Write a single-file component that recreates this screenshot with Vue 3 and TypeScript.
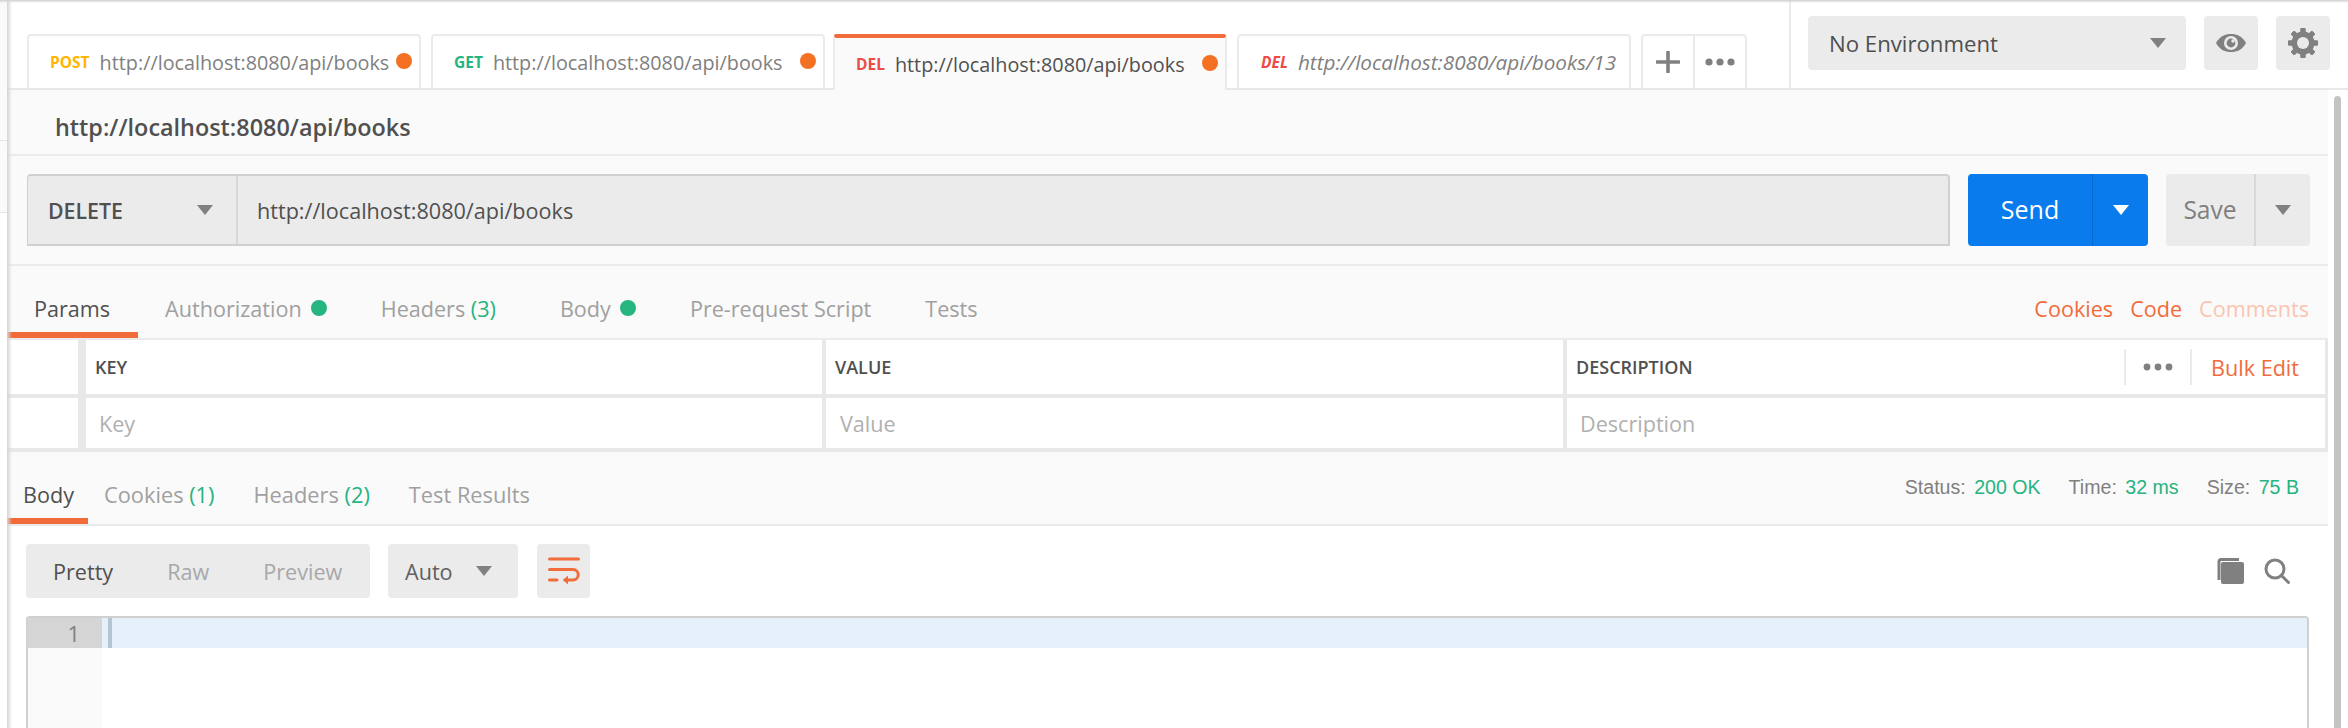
<script setup lang="ts">
interface Tab { method: string; url: string; cls: string; dot: boolean; active?: boolean; draft?: boolean }
const tabs: Tab[] = [
  { method: 'POST', url: 'http://localhost:8080/api/books', cls: 'post', dot: true },
  { method: 'GET', url: 'http://localhost:8080/api/books', cls: 'get', dot: true },
  { method: 'DEL', url: 'http://localhost:8080/api/books', cls: 'del', dot: true, active: true },
  { method: 'DEL', url: 'http://localhost:8080/api/books/13', cls: 'del', dot: false, draft: true },
]
const gearTeeth: number[] = [0, 45, 90, 135, 180, 225, 270, 315]
</script>

<template>
  <div class="app">
    <div class="rail">
      <div class="rail-a"></div>
      <div class="rail-b"></div>
      <div class="rail-c"></div>
    </div>
    <div class="main">
      <header class="topbar">
        <div class="tabs">
          <div
            v-for="(t, i) in tabs"
            :key="i"
            class="tab"
            :class="{ active: t.active, draft: t.draft }"
          >
            <span class="method" :class="t.cls">{{ t.method }}</span>
            <span class="tab-url">{{ t.url }}</span>
            <span v-if="t.dot" class="tab-dot"></span>
          </div>
          <div class="tab-actions">
            <div class="tab-action">
              <svg width="24" height="22" viewBox="0 0 24 22"><path d="M1 11H23M12 1V21" stroke="#808080" stroke-width="3.6" stroke-linecap="round" fill="none" /></svg>
            </div>
            <div class="tab-action last">
              <svg width="30" height="8" viewBox="0 0 30 8"><circle cx="4" cy="4" r="3.6" fill="#808080" /><circle cx="15" cy="4" r="3.6" fill="#808080" /><circle cx="26" cy="4" r="3.6" fill="#808080" /></svg>
            </div>
          </div>
        </div>
        <div class="env">
          <div class="env-select">
            <span>No Environment</span>
            <svg class="caret" width="16" height="10" viewBox="0 0 16 10"><path d="M0 0H16L8 10Z" fill="#808080" /></svg>
          </div>
          <div class="icon-btn">
            <svg width="32" height="20" viewBox="0 0 32 20">
              <path d="M1 10C5 3 10 1 16 1s11 2 15 9c-4 7-9 9-15 9S5 17 1 10Z" fill="#808080" />
              <circle cx="16" cy="10" r="7" fill="#ebebeb" />
              <circle cx="16" cy="10" r="4.4" fill="#808080" />
              <circle cx="18" cy="8" r="1.7" fill="#ebebeb" />
            </svg>
          </div>
          <div class="icon-btn">
            <svg width="32" height="32" viewBox="0 0 32 32">
              <rect v-for="a in gearTeeth" :key="a" x="13.5" y="1" width="5" height="30" rx="1" fill="#808080" :transform="`rotate(${a + 0} 16 16)`" />
              <circle cx="16" cy="16" r="11.5" fill="#808080" />
              <circle cx="16" cy="16" r="6" fill="#ebebeb" />
            </svg>
          </div>
        </div>
      </header>

      <div class="workspace">
        <div class="pane">
          <div class="title">http://localhost:8080/api/books</div>

          <div class="request">
            <div class="urlbar">
              <div class="method-select">
                <span>DELETE</span>
                <svg width="16" height="10" viewBox="0 0 16 10"><path d="M0 0H16L8 10Z" fill="#808080" /></svg>
              </div>
              <div class="url-input">http://localhost:8080/api/books</div>
            </div>
            <div class="send">
              <span class="send-label">Send</span>
              <span class="send-drop">
                <svg width="16" height="10" viewBox="0 0 16 10"><path d="M0 0H16L8 10Z" fill="#fff" /></svg>
              </span>
            </div>
            <div class="save">
              <span class="save-label">Save</span>
              <span class="save-drop">
                <svg width="16" height="10" viewBox="0 0 16 10"><path d="M0 0H16L8 10Z" fill="#808080" /></svg>
              </span>
            </div>
          </div>

          <nav class="req-tabs">
            <span class="rt on">Params</span>
            <span class="rt">Authorization<i class="gdot"></i></span>
            <span class="rt rt-headers">Headers <em>(3)</em></span>
            <span class="rt">Body<i class="gdot"></i></span>
            <span class="rt">Pre-request Script</span>
            <span class="rt">Tests</span>
            <span class="links">
              <span>Cookies</span>
              <span>Code</span>
              <span class="faint">Comments</span>
            </span>
          </nav>

          <div class="kv head">
            <div class="c0"></div>
            <div class="c1">KEY</div>
            <div class="c2">VALUE</div>
            <div class="c3">
              <span>DESCRIPTION</span>
              <span class="kv-tools">
                <span class="kv-more">
                  <svg width="30" height="8" viewBox="0 0 30 8"><circle cx="4" cy="4" r="3.4" fill="#808080" /><circle cx="15" cy="4" r="3.4" fill="#808080" /><circle cx="26" cy="4" r="3.4" fill="#808080" /></svg>
                </span>
                <span class="bulk">Bulk Edit</span>
              </span>
            </div>
          </div>
          <div class="kv row">
            <div class="c0"></div>
            <div class="c1">Key</div>
            <div class="c2">Value</div>
            <div class="c3">Description</div>
          </div>

          <div class="res-head">
            <nav class="res-tabs">
              <span class="rs on">Body</span>
              <span class="rs">Cookies <em>(1)</em></span>
              <span class="rs">Headers <em>(2)</em></span>
              <span class="rs">Test Results</span>
            </nav>
            <div class="meta">
              <span>Status: <b>200 OK</b></span>
              <span>Time: <b>32 ms</b></span>
              <span>Size: <b>75 B</b></span>
            </div>
          </div>

          <div class="res-body">
            <div class="toolbar">
              <div class="seg">
                <span class="seg-on">Pretty</span>
                <span>Raw</span>
                <span>Preview</span>
              </div>
              <div class="auto">
                <span>Auto</span>
                <svg width="16" height="10" viewBox="0 0 16 10"><path d="M0 0H16L8 10Z" fill="#808080" /></svg>
              </div>
              <div class="wrap-btn">
                <svg width="32" height="28" viewBox="0 0 32 28" fill="none" stroke="#f26b3a" stroke-width="3" stroke-linecap="round">
                  <path d="M1.5 2H30.5" />
                  <path d="M1.5 12.5H25a5.2 5.2 0 0 1 0 10.5H17" />
                  <path d="M1.5 23H9" />
                  <path d="M20 18.5L15 23L20 27.5Z" fill="#f26b3a" stroke="none" />
                </svg>
              </div>
              <div class="tool-right">
                <svg width="28" height="26" viewBox="0 0 28 26">
                  <path d="M3 22V3.5A2 2 0 0 1 5 1.5H23" fill="none" stroke="#808080" stroke-width="3" />
                  <rect x="5" y="4" width="23" height="22" rx="2" fill="#808080" />
                </svg>
                <svg width="26" height="26" viewBox="0 0 26 26" fill="none" stroke="#808080" stroke-width="3" stroke-linecap="round">
                  <circle cx="11" cy="11" r="9" />
                  <path d="M17.5 17.5L24.5 24.5" />
                </svg>
              </div>
            </div>
            <div class="editor">
              <div class="line">
                <div class="gutter-num">1</div>
                <div class="cursor"></div>
              </div>
              <div class="gutter-rest"></div>
            </div>
          </div>
        </div>
        <div class="scrollbar"></div>
      </div>
    </div>
  </div>
</template>

<style>
html, body { margin: 0; background: #fff; }
</style>

<style scoped>
.app {
  width: 2348px;
  height: 728px;
  overflow: hidden;
  display: flex;
  position: relative;
  background: #fff;
  font-family: "Open Sans", "Liberation Sans", sans-serif;
  font-size: 21.6px;
  color: #505050;
}
.app::before {
  content: "";
  position: absolute;
  left: 0;
  right: 0;
  top: 0;
  height: 3px;
  background: linear-gradient(#cfcfcf, #fff0);
  z-index: 3;
}
.rail {
  width: 7px;
  flex: none;
  display: flex;
  flex-direction: column;
}
.rail-a { height: 140px; background: #fafafa; border-bottom: 1px solid #e6e6e6; }
.rail-b { height: 71px; background: #fafafa; border-bottom: 1px solid #e6e6e6; }
.rail-c { flex: 1; background: #fff; }
.main {
  width: 2341px;
  flex: none;
  display: flex;
  flex-direction: column;
  position: relative;
}
.main::before {
  content: "";
  position: absolute;
  left: 0;
  top: 0;
  bottom: 0;
  width: 5px;
  background: linear-gradient(90deg, #d4d4d4, #fff0);
  z-index: 3;
}
.topbar {
  height: 90px;
  box-sizing: border-box;
  flex: none;
  display: flex;
  border-bottom: 2px solid #e8e8e8;
}
.tabs {
  width: 1784px;
  flex: none;
  box-sizing: border-box;
  padding-left: 20px;
  display: flex;
  gap: 10px;
  align-items: flex-start;
  padding-top: 34px;
  border-right: 2px solid #ebebeb;
}
.tab {
  width: 394px;
  height: 54px;
  box-sizing: border-box;
  background: #fff;
  border: 2px solid #ebebeb;
  border-bottom: 0;
  border-radius: 4px 4px 0 0;
  display: flex;
  align-items: center;
  padding: 0 7px 0 21px;
  position: relative;
  white-space: nowrap;
  overflow: hidden;
  font-size: 19.8px;
}
.tab.active {
  height: 56px;
  width: 394px;
  margin-left: -2px;
  background: #fafafa;
  border-top: 4px solid #f26b3a;
  z-index: 2;
}
.tab.draft { padding-left: 22px; padding-right: 10px; }
.tab.draft .tab-url { font-size: 20.7px; }
.method {
  font-size: 15.5px;
  font-weight: 700;
  margin-right: 10px;
  flex: none;
}
.post { color: #ffb400; }
.get { color: #26b47f; }
.del { color: #ed4b48; }
.tab-url { color: #808080; flex: 1; overflow: hidden; }
.tab.active .tab-url { color: #505050; }
.tab.draft .method, .tab.draft .tab-url { font-style: italic; }
.tab-dot {
  width: 16px;
  height: 16px;
  border-radius: 50%;
  background: #f47023;
  flex: none;
  margin-left: 4px;
  margin-top: -2px;
}
.tab-actions {
  display: flex;
  height: 54px;
  box-sizing: border-box;
  border: 2px solid #ebebeb;
  border-bottom: 0;
  border-radius: 4px 4px 0 0;
}
.tab-action {
  width: 50px;
  display: flex;
  align-items: center;
  justify-content: center;
  border-right: 2px solid #ebebeb;
}
.tab-action.last { border-right: 0; }
.env {
  display: flex;
  gap: 18px;
  padding: 16px 0 0 17px;
}
.env-select {
  width: 378px;
  height: 54px;
  box-sizing: border-box;
  background: #ebebeb;
  border-radius: 4px;
  display: flex;
  align-items: center;
  justify-content: space-between;
  padding: 0 20px 0 21px;
  font-weight: 500;
  font-size: 22.2px;
}
.icon-btn {
  width: 54px;
  height: 54px;
  background: #ebebeb;
  border-radius: 4px;
  display: flex;
  align-items: center;
  justify-content: center;
}
.workspace {
  flex: 1;
  display: flex;
  min-height: 0;
}
.pane {
  width: 2321px;
  flex: none;
  background: #fafafa;
}
.scrollbar {
  width: 7px;
  margin: 6px 0 0 6px;
  background: #c4c4c4;
  border-radius: 4px 4px 0 0;
}
.title {
  height: 66px;
  box-sizing: border-box;
  padding: 21px 0 0 48px;
  font-size: 23.4px;
  line-height: 32px;
  font-weight: 600;
  color: #505050;
  border-bottom: 2px solid #ebebeb;
}
.request {
  height: 110px;
  box-sizing: border-box;
  padding: 18px 18px 18px 20px;
  display: flex;
  border-bottom: 2px solid #ebebeb;
}
.urlbar {
  width: 1923px;
  height: 72px;
  box-sizing: border-box;
  display: flex;
  background: #ebebeb;
  border: 2px solid #d0d0d0;
  border-left-width: 1px;
  border-radius: 4px 4px 0 0;
  flex: none;
}
.method-select {
  width: 210px;
  box-sizing: border-box;
  border-right: 2px solid #d8d8d8;
  display: flex;
  align-items: center;
  justify-content: space-between;
  padding: 0 23px 0 20px;
  font-weight: 600;
  font-size: 21.3px;
}
.url-input {
  padding-left: 19px;
  display: flex;
  align-items: center;
  font-size: 21.6px;
}
.send {
  margin-left: 18px;
  width: 180px;
  height: 72px;
  background: #097bed;
  border-radius: 4px;
  display: flex;
  color: #fff;
  font-size: 25px;
  font-weight: 500;
  flex: none;
}
.send-label { width: 125px; display: flex; align-items: center; justify-content: center; border-right: 1px solid #0969c9; padding-bottom: 2px; box-sizing: border-box; }
.send-drop { flex: 1; display: flex; align-items: center; justify-content: center; }
.save {
  margin-left: 18px;
  width: 144px;
  height: 72px;
  background: #ebebeb;
  border-radius: 4px;
  display: flex;
  color: #808080;
  font-size: 24.6px;
  font-weight: 500;
  flex: none;
}
.save-label { width: 90px; display: flex; align-items: center; justify-content: center; border-right: 2px solid #d8d8d8; padding-bottom: 2px; box-sizing: border-box; }
.save-drop { flex: 1; display: flex; align-items: center; justify-content: center; }
.req-tabs {
  height: 74px;
  box-sizing: border-box;
  display: flex;
  align-items: stretch;
  border-bottom: 2px solid #ebebeb;
}
.rt {
  padding: 27px 27px 0;
  line-height: 32px;
  color: #a0a0a0;
  display: flex;
  align-items: flex-start;
  white-space: pre;
  height: 72px;
  box-sizing: border-box;
}
.rt.on { color: #505050; border-bottom: 6px solid #f26b3a; padding-right: 28px; }
.rt em, .rs em { font-style: normal; color: #26b47f; }
.rt-headers { margin-right: 10px; }
.gdot {
  width: 16px;
  height: 16px;
  margin: 7px 0 0 9px;
  border-radius: 50%;
  background: #26b47f;
  flex: none;
}
.links {
  margin-left: auto;
  padding: 27px 19px 0 0;
  line-height: 32px;
  display: flex;
  gap: 17px;
  color: #f26b3a;
}
.faint { color: #fbc4b0; }
.kv {
  display: grid;
  grid-template-columns: 79px 740px 741px 1fr;
  box-sizing: border-box;
  border-bottom: 4px solid #e8e8e8;
}
.kv > div {
  background: #fff;
  display: flex;
  align-items: center;
  box-sizing: border-box;
  border-right: 4px solid #e8e8e8;
}
.kv > .c0 { border-right-width: 8px; }
.kv > .c3 { border-right-width: 3px; }
.head { height: 58px; font-size: 18px; font-weight: 600; color: #505050; }
.head .c1 { padding-left: 9px; }
.head .c2, .head .c3 { padding-left: 9px; }
.row { height: 54px; color: #b0b0b0; }
.row .c1 { padding-left: 13px; }
.row .c2 { padding-left: 14px; }
.row .c3 { padding-left: 13px; }
.kv-tools { margin-left: auto; display: flex; align-items: center; height: 100%; }
.kv-more {
  width: 68px;
  height: 36px;
  box-sizing: border-box;
  border-left: 2px solid #ebebeb;
  border-right: 2px solid #ebebeb;
  display: flex;
  align-items: center;
  justify-content: center;
}
.bulk { color: #f26b3a; font-weight: 400; font-size: 21.6px; padding: 0 26px 0 19px; }
.res-head {
  height: 74px;
  box-sizing: border-box;
  display: flex;
  justify-content: space-between;
  border-bottom: 2px solid #ebebeb;
}
.res-tabs { display: flex; height: 72px; }
.rs {
  padding: 27px 0 0;
  line-height: 32px;
  color: #a0a0a0;
  box-sizing: border-box;
  height: 72px;
  margin-right: 39px;
  white-space: pre;
  font-size: 21.8px;
}
.rs.on {
  color: #505050;
  padding: 27px 14px 0 16px;
  border-bottom: 6px solid #f26b3a;
  margin-right: 16px;
  font-size: 21.6px;
}
.meta {
  display: flex;
  gap: 28px;
  padding: 24px 29px 0 0;
  font-family: "Liberation Sans", Arial, sans-serif;
  font-size: 19.6px;
  line-height: 22px;
  color: #808080;
}
.meta b { font-weight: 400; color: #26b47f; margin-left: 3px; }
.res-body { background: #fff; padding-top: 18px; height: 202px; }
.toolbar {
  display: flex;
  align-items: center;
  height: 54px;
  padding-left: 19px;
}
.seg {
  width: 344px;
  height: 54px;
  background: #ebebeb;
  border-radius: 4px;
  display: flex;
  align-items: center;
  color: #a8a8a8;
  box-sizing: border-box;
  padding-left: 27px;
  gap: 0;
}
.seg span { margin-right: 54px; }
.seg .seg-on { color: #505050; }
.auto {
  margin-left: 18px;
  width: 130px;
  height: 54px;
  background: #ebebeb;
  border-radius: 4px;
  display: flex;
  align-items: center;
  justify-content: space-between;
  box-sizing: border-box;
  padding: 0 26px 0 17px;
  color: #606060;
}
.wrap-btn {
  margin-left: 19px;
  width: 53px;
  height: 54px;
  background: #ebebeb;
  border-radius: 4px;
  display: flex;
  align-items: center;
  justify-content: center;
}
.tool-right {
  margin-left: auto;
  margin-right: 38px;
  display: flex;
  align-items: center;
  gap: 20px;
}
.editor {
  margin: 18px 0 0 19px;
  width: 2283px;
  height: 112px;
  box-sizing: border-box;
  border: 2px solid #d0d0d0;
  border-bottom: 0;
  border-radius: 4px 4px 0 0;
  position: relative;
  overflow: hidden;
}
.line {
  height: 30px;
  background: #e5f0fb;
  display: flex;
}
.gutter-num {
  width: 74px;
  height: 30px;
  box-sizing: border-box;
  background: #d5d5d5;
  color: #808080;
  text-align: right;
  padding-right: 22px;
  line-height: 30px;
  font-size: 22px;
}
.cursor {
  width: 4px;
  height: 30px;
  margin-left: 6px;
  background: #b6c5d4;
}
.gutter-rest {
  width: 74px;
  height: 80px;
  background: #fafafa;
}
</style>
